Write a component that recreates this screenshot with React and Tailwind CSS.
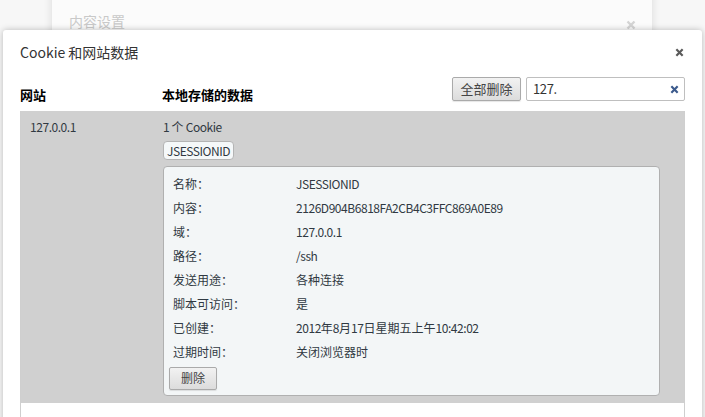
import React from 'react';

const details = [
    ['名称：', 'JSESSIONID'],
    ['内容：', '2126D904B6818FA2CB4C3FFC869A0E89'],
    ['域：', '127.0.0.1'],
    ['路径：', '/ssh'],
    ['发送用途：', '各种连接'],
    ['脚本可访问：', '是'],
    ['已创建：', '2012年8月17日星期五上午10:42:02'],
    ['过期时间：', '关闭浏览器时'],
];

// latin runs are squeezed a little so they get the narrow look of the original UI font
const Txt = ({ children }) => {
    const parts = String(children).match(/[\x20-\x7e]+|[^\x20-\x7e]+/g) || [];
    return parts.map((p, i) =>
        /^[\x20-\x7e]+$/.test(p) ? (
            <span key={i} className="tracking-[-0.45px]">{p}</span>
        ) : (
            <span key={i}>{p}</span>
        )
    );
};

const CloseX = ({ className }) => (
    <svg viewBox="0 0 10 10" className={className}>
        <path d="M1.5 1.5 L8.5 8.5 M8.5 1.5 L1.5 8.5" stroke="currentColor" strokeWidth="2.4" strokeLinecap="butt" />
    </svg>
);

const App = () => {
    return (
        <div className="w-[705px] h-[417px] overflow-hidden relative bg-[#f7f7f7] text-[#303942] [font-family:'Noto_Sans_CJK_SC','Noto_Sans',sans-serif]">
            {/* Dimmed parent dialog behind */}
            <div className="absolute left-[52px] top-[-20px] w-[600px] h-[70px] bg-[#fbfbfb] rounded-[3px] shadow-[0_2px_10px_rgba(0,0,0,0.12)] flex items-end justify-between pl-[17px] pr-[16px] pb-[20px]">
                <span className="text-[14px] leading-[18px] text-[#c9c9c9]">内容设置</span>
                <CloseX className="w-[10px] h-[10px] text-[#d4d4d4]" />
            </div>

            {/* Cookie dialog */}
            <div className="relative mt-[30px] ml-[3px] w-[699px] h-[400px] bg-white rounded-[3px] shadow-[0_0_6px_rgba(0,0,0,0.25)] px-[17px]">
                <div className="h-[44px] flex items-center justify-between">
                    <span className="text-[14px] leading-[18px] text-[#333]">Cookie 和网站数据</span>
                    <CloseX className="w-[9px] h-[9px] text-[#5a5a5a] mr-[1px]" />
                </div>

                {/* Header row */}
                <div className="h-[37px] flex">
                    <div className="w-[142px] self-end pb-[8px] text-[13px] leading-[16px] font-bold text-black">网站</div>
                    <div className="flex-1 self-end pb-[8px] text-[13px] leading-[16px] font-bold text-black">本地存储的数据</div>
                    <div className="flex self-start mt-[3px] gap-[5px]">
                        <button className="w-[69px] h-[24px] border border-[#aaa] rounded-[2px] bg-gradient-to-b from-[#f2f2f2] to-[#dcdcdc] shadow-[0_1px_1px_rgba(0,0,0,0.1)] text-[13px] leading-[16px] text-[#444]">
                            全部删除
                        </button>
                        <div className="w-[159px] h-[24px] border border-[#bfbfbf] rounded-[2px] bg-white flex items-center justify-between pl-[6px] pr-[5px]">
                            <span className="text-[13px] leading-[16px] text-[#333] tracking-[-0.4px]">127.</span>
                            <CloseX className="w-[9px] h-[9px] text-[#3b5a8c]" />
                        </div>
                    </div>
                </div>

                {/* List */}
                <div className="border-x border-[#cfcfcf] bg-white h-[320px]">
                    <div className="bg-[#d0d0d0] flex pt-[8px] pb-[7px] pl-[9px]">
                        <div className="w-[133px] text-[12px] leading-[16px]"><Txt>127.0.0.1</Txt></div>
                        <div className="flex flex-col items-start">
                            <div className="text-[12px] leading-[16px]"><Txt>1 个 Cookie</Txt></div>
                            <div className="mt-[6px] h-[19px] px-[3px] border border-[#b4b4b4] rounded-[4px] bg-[#f5f8f9] flex items-center text-[12px] leading-[16px]">
                                <Txt>JSESSIONID</Txt>
                            </div>
                            <div className="mt-[6px] w-[497px] border border-[#b0b0b0] rounded-[4px] bg-[#f3f6f7] pt-[5px] pb-[5px] pl-[5px]">
                                {details.map(([k, v]) => (
                                    <div key={k} className="flex h-[24px] items-center text-[12px] leading-[16px]">
                                        <span className="w-[127px] pl-[4px]">{k}</span>
                                        <span><Txt>{v}</Txt></span>
                                    </div>
                                ))}
                                <button className="mt-[2px] w-[48px] h-[23px] border border-[#aaa] rounded-[2px] bg-gradient-to-b from-[#f2f2f2] to-[#dcdcdc] shadow-[0_1px_1px_rgba(0,0,0,0.1)] text-[12px] leading-[16px] text-[#444]">
                                    删除
                                </button>
                            </div>
                        </div>
                    </div>
                </div>
            </div>
        </div>
    );
};

export default App;
